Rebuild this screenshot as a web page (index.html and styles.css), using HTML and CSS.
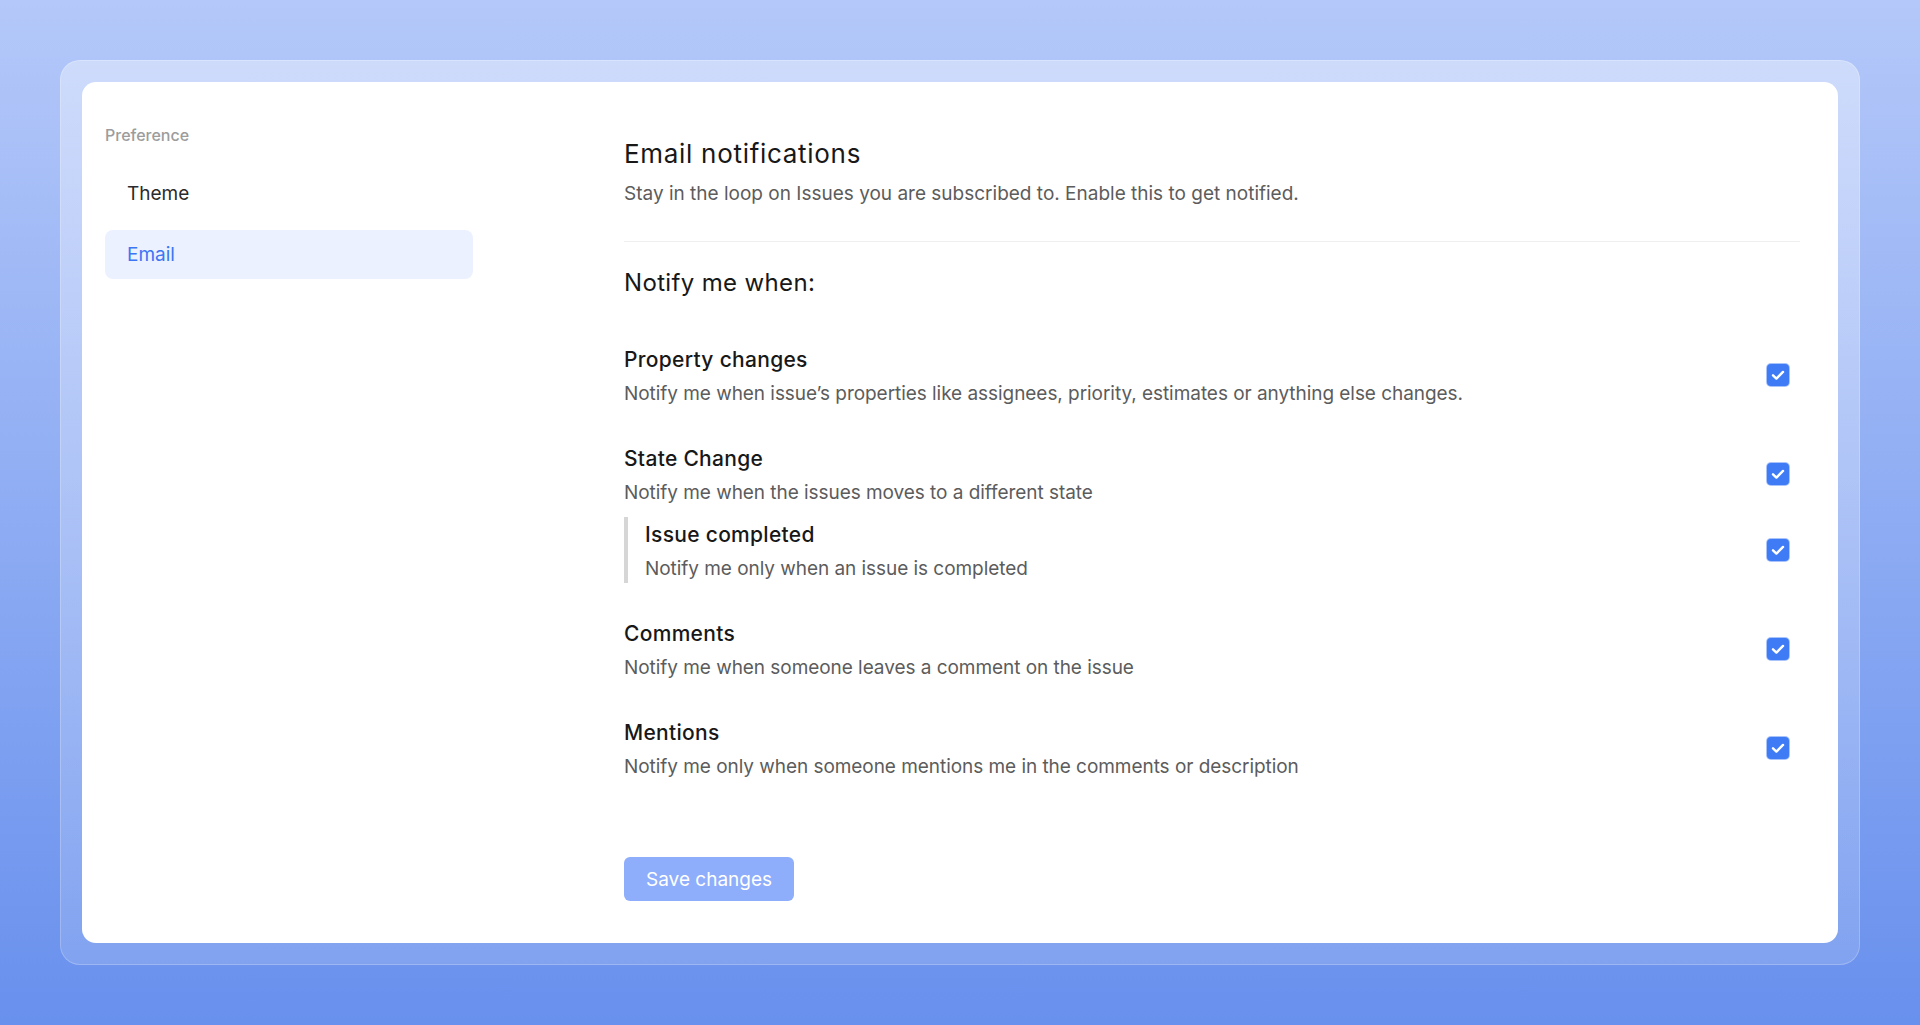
FILE: index.html
```html
<!DOCTYPE html>
<html lang="en">
<head>
<meta charset="utf-8">
<title>Email notifications</title>
<link rel="stylesheet" href="styles.css">
</head>
<body>
<div class="frame">
  <div class="card">
    <aside class="sidebar">
      <div class="side-label">Preference</div>
      <nav class="side-nav">
        <a class="nav-item">Theme</a>
        <a class="nav-item active">Email</a>
      </nav>
    </aside>
    <main class="main">
      <h1 class="title">Email notifications</h1>
      <p class="subtitle">Stay in the loop on Issues you are subscribed to. Enable this to get notified.</p>
      <hr class="divider">
      <h2 class="section">Notify me when:</h2>
      <div class="list">
        <div class="item">
          <div class="row">
            <div class="text">
              <div class="item-title">Property changes</div>
              <div class="item-desc">Notify me when issue’s properties like assignees, priority, estimates or anything else changes.</div>
            </div>
            <span class="check"><svg viewBox="0 0 22 22" width="22" height="22"><path d="M6 11.3 L9.4 14.6 L16 7.9" fill="none" stroke="#fff" stroke-width="2.4" stroke-linecap="round" stroke-linejoin="round"/></svg></span>
          </div>
        </div>
        <div class="item">
          <div class="row">
            <div class="text">
              <div class="item-title">State Change</div>
              <div class="item-desc">Notify me when the issues moves to a different state</div>
            </div>
            <span class="check"><svg viewBox="0 0 22 22" width="22" height="22"><path d="M6 11.3 L9.4 14.6 L16 7.9" fill="none" stroke="#fff" stroke-width="2.4" stroke-linecap="round" stroke-linejoin="round"/></svg></span>
          </div>
          <div class="row sub">
            <div class="text">
              <div class="item-title">Issue completed</div>
              <div class="item-desc">Notify me only when an issue is completed</div>
            </div>
            <span class="check"><svg viewBox="0 0 22 22" width="22" height="22"><path d="M6 11.3 L9.4 14.6 L16 7.9" fill="none" stroke="#fff" stroke-width="2.4" stroke-linecap="round" stroke-linejoin="round"/></svg></span>
          </div>
        </div>
        <div class="item">
          <div class="row">
            <div class="text">
              <div class="item-title">Comments</div>
              <div class="item-desc">Notify me when someone leaves a comment on the issue</div>
            </div>
            <span class="check"><svg viewBox="0 0 22 22" width="22" height="22"><path d="M6 11.3 L9.4 14.6 L16 7.9" fill="none" stroke="#fff" stroke-width="2.4" stroke-linecap="round" stroke-linejoin="round"/></svg></span>
          </div>
        </div>
        <div class="item">
          <div class="row">
            <div class="text">
              <div class="item-title">Mentions</div>
              <div class="item-desc">Notify me only when someone mentions me in the comments or description</div>
            </div>
            <span class="check"><svg viewBox="0 0 22 22" width="22" height="22"><path d="M6 11.3 L9.4 14.6 L16 7.9" fill="none" stroke="#fff" stroke-width="2.4" stroke-linecap="round" stroke-linejoin="round"/></svg></span>
          </div>
        </div>
      </div>
      <button class="save">Save changes</button>
    </main>
  </div>
</div>
</body>
</html>
```
FILE: styles.css
```css
* { box-sizing: border-box; }
html, body { margin: 0; height: 100%; }
body {
  font-family: Inter, "Noto Sans", "Liberation Sans", sans-serif;
  background: linear-gradient(180deg, #b4c8f9 0%, #92aff4 45%, #6890ed 100%);
  padding: 60px;
  overflow: hidden;
}
.frame {
  height: 905px;
  padding: 22px;
  border-radius: 20px;
  background: linear-gradient(180deg, rgba(255,255,255,0.38) 0%, rgba(255,255,255,0.14) 100%);
  box-shadow: inset 0 0 0 1px rgba(255,255,255,0.22);
  display: flex;
}
.card {
  flex: 1;
  background: #fff;
  border-radius: 14px;
  display: flex;
  padding: 0 38px 0 23px;
}
.sidebar {
  width: 368px;
  padding-top: 43px;
}
.side-label {
  font-size: 16px;
  line-height: 20px;
  font-weight: 500;
  color: #9c9c9c;
}
.side-nav {
  margin-top: 24px;
  display: flex;
  flex-direction: column;
  gap: 12px;
}
.nav-item {
  display: block;
  height: 49px;
  line-height: 49px;
  padding-left: 22px;
  border-radius: 8px;
  font-size: 19px;
  color: #2b2b2b;
}
.nav-item.active {
  background: #ebf1fe;
  color: #3b76f4;
}
.main {
  flex: 1;
  margin-left: 151px;
  padding-top: 56px;
}
.title {
  margin: 0;
  font-size: 26px;
  line-height: 32px;
  font-weight: 400;
  letter-spacing: 0.7px;
  color: #181818;
}
.subtitle {
  margin: 10px 0 0;
  font-size: 19px;
  line-height: 28px;
  color: #5c5c5c;
}
.divider {
  margin: 33px 0 0;
  border: 0;
  height: 1px;
  background: #efefef;
}
.section {
  margin: 26px 0 0;
  font-size: 24px;
  line-height: 30px;
  font-weight: 400;
  letter-spacing: 0.35px;
  color: #181818;
}
.list {
  margin-top: 48px;
  padding-right: 11px;
  display: flex;
  flex-direction: column;
  gap: 37px;
}
.row {
  display: flex;
  align-items: center;
  justify-content: space-between;
}
.row.sub {
  margin-top: 10px;
  padding: 4px 0 0 17px;
  border-left: 4px solid #d6d6d6;
}
.item-title {
  font-size: 21px;
  line-height: 28px;
  font-weight: 500;
  letter-spacing: 0.3px;
  color: #181818;
}
.item-desc {
  margin-top: 6px;
  font-size: 19px;
  line-height: 28px;
  letter-spacing: -0.05px;
  color: #5c5c5c;
}
.check {
  width: 22px;
  height: 22px;
  border-radius: 4px;
  background: #3f7bf5;
  box-shadow: 0 0 0 1px #a9c3fb;
  display: flex;
  margin-top: -4px;
}
.save {
  margin-top: 76px;
  height: 44px;
  padding: 0 22px;
  border: 0;
  border-radius: 6px;
  background: #8eadfb;
  color: #fff;
  font-family: inherit;
  font-size: 19px;
}
```
